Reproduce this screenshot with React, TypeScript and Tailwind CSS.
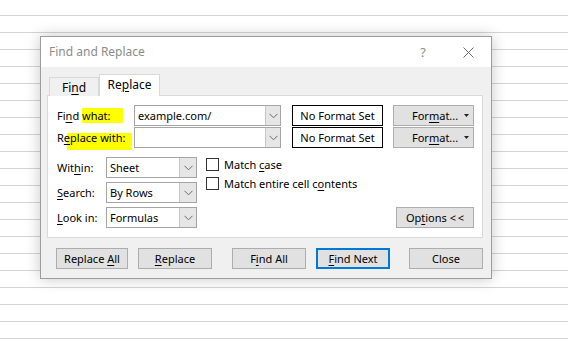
import React from "react";

const U = ({ children }: { children: React.ReactNode }) => (
  <span className="underline decoration-1 underline-offset-[2px]">{children}</span>
);

const Chevron = () => (
  <svg width="9" height="6" viewBox="0 0 9 6" className="block">
    <polyline points="0.5,0.8 4.5,4.8 8.5,0.8" fill="none" stroke="#6a6a6a" strokeWidth="1" />
  </svg>
);

function Combo({ value, w }: { value: string; w: string }) {
  return (
    <div className={`flex h-[21px] ${w} border border-[#a5a5a5] bg-white`}>
      <div className="flex flex-1 items-center pl-[3px] text-black">{value}</div>
      <div className="flex w-[15px] items-center justify-center border-l border-[#c8c8c8] bg-[#e6e6e6]">
        <Chevron />
      </div>
    </div>
  );
}

function Select({ value }: { value: string }) {
  return (
    <div className="flex h-[21px] w-[91px] border border-[#a5a5a5] bg-white">
      <div className="flex flex-1 items-center pl-[3px] text-black">{value}</div>
      <div className="flex w-[17px] items-center justify-center border-l border-[#c8c8c8] bg-[#e6e6e6]">
        <Chevron />
      </div>
    </div>
  );
}

function Btn({ children, w = "w-[74px]", focus = false }: { children: React.ReactNode; w?: string; focus?: boolean }) {
  return (
    <div
      className={`flex h-[21px] ${w} items-center justify-center bg-[#e1e1e1] text-black ${
        focus ? "border-2 border-[#0078d7]" : "border border-[#adadad]"
      }`}
    >
      <span>{children}</span>
    </div>
  );
}

function FormatBtn() {
  return (
    <div className="flex h-[21px] w-[81px] items-center border border-[#adadad] bg-[#e1e1e1] pl-[18px] pr-[4px] text-black">
      <span className="flex-1">
        For<U>m</U>at...
      </span>
      <svg width="5" height="3" viewBox="0 0 5 3">
        <polygon points="0,0 5,0 2.5,3" fill="#222" />
      </svg>
    </div>
  );
}

function NoFormat() {
  return (
    <div className="flex h-[21px] w-[91px] items-center justify-center border border-black bg-white text-black">
      <span>No Format Set</span>
    </div>
  );
}

function Check({ children }: { children: React.ReactNode }) {
  return (
    <div className="flex items-center gap-[5px] text-black">
      <div className="h-[13px] w-[13px] border border-[#333] bg-white" />
      <span>{children}</span>
    </div>
  );
}

export default function App() {
  return (
    <div className="h-[350px] w-[568px] overflow-hidden bg-white bg-[repeating-linear-gradient(to_bottom,transparent_0px,transparent_15px,#d4d4d4_15px,#d4d4d4_16px,transparent_16px,transparent_17px)] pl-[40px] pt-[36px] font-['Noto_Sans',sans-serif] text-[11px] leading-none">
      <div className="flex h-[243px] w-[452px] flex-col border border-[#9c9c9c] shadow-[0_0_14px_rgba(0,0,0,0.22)]">
        {/* title bar */}
        <div className="flex h-[30px] items-center bg-white pl-[8px] pr-[17px]">
          <span className="flex-1 text-[12px] text-[#8c8c8c]">Find and Replace</span>
          <span className="mr-[37px] text-[13px] text-[#8c8c8c]">?</span>
          <svg width="11" height="11" viewBox="0 0 11 11">
            <path d="M0.5 0.5 L10.5 10.5 M10.5 0.5 L0.5 10.5" stroke="#6e6e6e" strokeWidth="1" />
          </svg>
        </div>

        {/* body */}
        <div className="flex flex-1 flex-col bg-[#f0f0f0] pl-[6px] pr-[8px] pt-[7px]">
          {/* tabs */}
          <div className="relative z-10 -mb-px flex h-[22px] items-end pl-[2px]">
            <div className="flex h-[19px] w-[50px] items-center justify-center border border-b-0 border-[#d9d9d9] bg-[#f0f0f0] pt-[1px] text-[12px] text-black">
              <span>
                Fi<U>n</U>d
              </span>
            </div>
            <div className="flex h-[22px] w-[61px] items-center justify-center border border-b-0 border-[#d9d9d9] bg-white pb-[1px] text-[12px] text-black">
              <span>
                Re<U>p</U>lace
              </span>
            </div>
          </div>

          {/* panel */}
          <div className="flex h-[143px] flex-col border border-[#d9d9d9] bg-white pl-[9px] pr-[8px] pt-[9px]">
            <div className="flex flex-col gap-[1px]">
              <div className="flex items-center">
                <div className="relative w-[77px]">
                  <span className="absolute left-[25px] top-[-2px] h-[15px] w-[41px] rounded-[1px] bg-[#ffff00]" />
                  <span className="relative">
                    Fi<U>n</U>d what:
                  </span>
                </div>
                <Combo value="example.com/" w="w-[147px]" />
                <div className="ml-[11px]">
                  <NoFormat />
                </div>
                <div className="ml-[10px]">
                  <FormatBtn />
                </div>
              </div>
              <div className="flex items-center">
                <div className="relative w-[77px]">
                  <span className="absolute left-[10px] top-[1px] h-[17px] w-[65px] bg-[#ffff00]" />
                  <span className="relative">
                    R<U>e</U>place with:
                  </span>
                </div>
                <Combo value="" w="w-[147px]" />
                <div className="ml-[11px]">
                  <NoFormat />
                </div>
                <div className="ml-[10px]">
                  <FormatBtn />
                </div>
              </div>
            </div>

            <div className="mt-[9px] flex">
              <div className="flex flex-col gap-[4px]">
                <div className="flex items-center">
                  <span className="w-[49px]">
                    Wit<U>h</U>in:
                  </span>
                  <Select value="Sheet" />
                </div>
                <div className="flex items-center">
                  <span className="w-[49px]">
                    <U>S</U>earch:
                  </span>
                  <Select value="By Rows" />
                </div>
                <div className="flex items-center">
                  <span className="w-[49px]">
                    <U>L</U>ook in:
                  </span>
                  <Select value="Formulas" />
                </div>
              </div>
              <div className="ml-[9px] flex flex-col gap-[6px] pt-[1px]">
                <Check>
                  Match <U>c</U>ase
                </Check>
                <Check>
                  Match entire cell c<U>o</U>ntents
                </Check>
              </div>
              <div className="flex flex-1 items-end justify-end">
                <Btn w="w-[78px]">
                  Op<U>t</U>ions &lt;&thinsp;&lt;
                </Btn>
              </div>
            </div>
          </div>

          {/* bottom buttons */}
          <div className="mt-[10px] flex pl-[9px]">
            <Btn>
              Replace <U>A</U>ll
            </Btn>
            <div className="ml-[10px]">
              <Btn>
                <U>R</U>eplace
              </Btn>
            </div>
            <div className="ml-[20px]">
              <Btn>
                F<U>i</U>nd All
              </Btn>
            </div>
            <div className="ml-[10px]">
              <Btn focus>
                <U>F</U>ind Next
              </Btn>
            </div>
            <div className="ml-[19px]">
              <Btn>Close</Btn>
            </div>
          </div>
        </div>
      </div>
    </div>
  );
}
